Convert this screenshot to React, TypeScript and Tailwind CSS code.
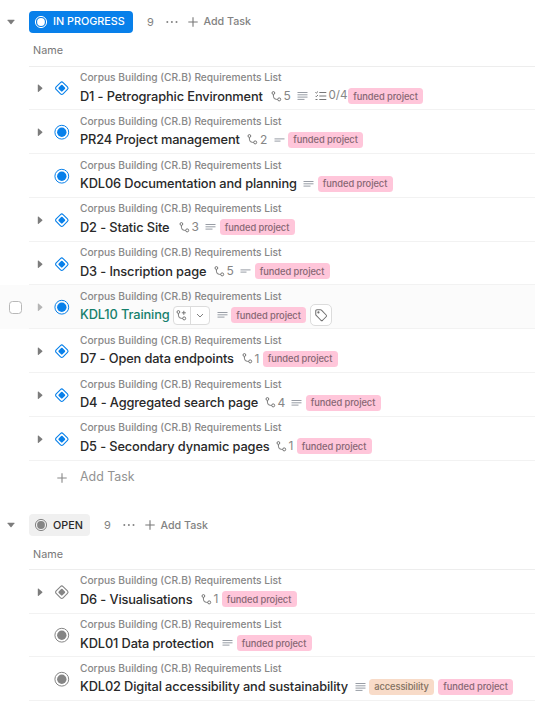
import React from "react";

type Shape = "diamond" | "circle";
type Lines = "short" | "medium" | "long";

interface Task {
  title: string;
  width: string;
  shape: Shape;
  expandable?: boolean;
  subtasks?: number;
  lines?: Lines;
  checklist?: string;
  accessibility?: boolean;
  hovered?: boolean;
}

const IN_PROGRESS: Task[] = [
  { title: "D1 - Petrographic Environment", width: "w-[183px]", shape: "diamond", expandable: true, subtasks: 5, lines: "long", checklist: "0/4" },
  { title: "PR24 Project management", width: "w-[159.5px]", shape: "circle", expandable: true, subtasks: 2, lines: "short" },
  { title: "KDL06 Documentation and planning", width: "w-[216px]", shape: "circle", lines: "medium" },
  { title: "D2 - Static Site", width: "w-[91px]", shape: "diamond", expandable: true, subtasks: 3, lines: "medium" },
  { title: "D3 - Inscription page", width: "w-[126px]", shape: "diamond", expandable: true, subtasks: 5, lines: "short" },
  { title: "KDL10 Training", width: "w-[89.5px]", shape: "circle", expandable: true, lines: "medium", hovered: true },
  { title: "D7 - Open data endpoints", width: "w-[154px]", shape: "diamond", expandable: true, subtasks: 1 },
  { title: "D4 - Aggregated search page", width: "w-[177px]", shape: "diamond", expandable: true, subtasks: 4, lines: "medium" },
  { title: "D5 - Secondary dynamic pages", width: "w-[188px]", shape: "diamond", expandable: true, subtasks: 1 },
];

const OPEN: Task[] = [
  { title: "D6 - Visualisations", width: "w-[113px]", shape: "diamond", expandable: true, subtasks: 1 },
  { title: "KDL01 Data protection", width: "w-[135px]", shape: "circle", lines: "medium" },
  { title: "KDL02 Digital accessibility and sustainability", width: "w-[267.5px]", shape: "circle", lines: "long", accessibility: true },
];

function StatusIcon({ shape, className }: { shape: Shape; className: string }) {
  return (
    <svg viewBox="0 0 16 16" className={`size-4 shrink-0 ${className}`} fill="none">
      {shape === "circle" ? (
        <>
          <circle cx="7.8" cy="8.2" r="6.9" stroke="currentColor" strokeWidth="1" />
          <circle cx="7.8" cy="8.2" r="4.7" fill="currentColor" />
        </>
      ) : (
        <>
          <rect x="2.9" y="3.3" width="9.8" height="9.8" rx="1.8" transform="rotate(45 7.8 8.2)" stroke="currentColor" strokeWidth="1.1" />
          <rect x="5.1" y="5.5" width="5.4" height="5.4" rx="1" transform="rotate(45 7.8 8.2)" fill="currentColor" />
        </>
      )}
    </svg>
  );
}

function Caret({ down, light }: { down?: boolean; light?: boolean }) {
  return (
    <svg viewBox="0 0 8 8" className={`size-2 shrink-0 ${light ? "text-[#b5b5b5]" : "text-[#7c7c7c]"}`} fill="currentColor">
      {down ? (
        <path d="M.8 1.8h6.4q.6 0 .3.5L4.5 6q-.5.5-1 0L.5 2.3q-.3-.5.3-.5Z" />
      ) : (
        <path d="M1.8.8v6.8q0 .6.6.3L6.2 4.7q.5-.5 0-1L2.4.5q-.6-.3-.6.3Z" />
      )}
    </svg>
  );
}

function Branch({ plus }: { plus?: boolean }) {
  return (
    <svg viewBox="0 0 11 11" className="size-[11px] shrink-0 text-[#757575]" fill="none" stroke="currentColor" strokeWidth="1">
      <circle cx="2.4" cy="2" r="1.4" />
      <path d="M2.4 3.4v1.8q0 3.2 3.2 3.2h1.1" />
      <circle cx="8.2" cy="8.4" r="1.5" />
      {plus && <path d="M7.8.8v4M5.8 2.8h4" />}
    </svg>
  );
}

function LinesIcon({ kind }: { kind: Lines }) {
  return (
    <svg viewBox="0 0 11 10" className="h-2.5 w-[11px] shrink-0 text-[#989da5]" fill="none" stroke="currentColor" strokeWidth="1">
      {kind === "long" && <path d="M.5 1.5h10M.5 3.8h10M.5 6.1h10M.5 8.4h7" />}
      {kind === "medium" && <path d="M.5 2.5h10M.5 4.8h10M.5 7.1h7" />}
      {kind === "short" && <path d="M.5 3.9h10M.5 6.1h6" />}
    </svg>
  );
}

function ChecklistIcon() {
  return (
    <svg viewBox="0 0 12 10" className="h-2.5 w-3 shrink-0 text-[#777]" fill="none" stroke="currentColor" strokeWidth="1">
      <path d="M4.3 1.5h7M4.3 5h7M4.3 8.5h7M.4 1.4l.8.8L3 .5M.4 4.9l.8.8L3 4M.5 8.5h2" />
    </svg>
  );
}

function Plus({ className }: { className: string }) {
  return (
    <svg viewBox="0 0 10 10" className={`size-2.5 shrink-0 ${className}`} fill="none" stroke="currentColor" strokeWidth="1.1">
      <path d="M5 .3v9.4M.3 5h9.4" />
    </svg>
  );
}

function FundedTag() {
  return (
    <span className="flex h-4 w-[75px] shrink-0 items-center justify-center rounded-[3.5px] bg-[#ffc6da] pt-px text-[9.3px] font-medium tracking-[-0.05px] text-[#866673]">
      funded project
    </span>
  );
}

function TaskRow({ task, color }: { task: Task; color: string }) {
  return (
    <div className={`flex h-[43.8px] ${task.hovered ? "bg-[#fbfbfb]" : ""}`}>
      <div className="flex w-[29px] shrink-0 items-center pl-[8.5px]">
        {task.hovered && <span className="size-[13px] rounded-[3.5px] border border-[#b8b8b8] bg-white" />}
      </div>
      <div className="flex min-w-0 grow border-b border-[#f2f2f2]">
        <div className="flex w-[25px] shrink-0 items-center pt-px pl-[7px]">
          {task.expandable && <Caret light={task.hovered} />}
        </div>
        <div className="flex w-[26px] shrink-0 items-center pt-px">
          <StatusIcon shape={task.shape} className={color} />
        </div>
        <div className="flex flex-col pt-[4.6px] whitespace-nowrap">
          <div className="h-[13px] text-[10.2px] leading-[13px] font-medium text-[#878787]">
            <span>Corpus Building (CR.B) Requirements List</span>
          </div>
          <div className="flex h-6 items-center">
            <span className={`shrink-0 text-[12.8px] font-medium tracking-[-0.12px] ${task.width} ${task.hovered ? "text-[#16806c]" : "text-[#292929]"}`}>
              {task.title}
            </span>
            {task.hovered && (
              <span className="ml-[3px] flex h-[19px] w-[37px] shrink-0 rounded-[4px] border border-[#dcdcdc] bg-white">
                <span className="flex w-[17px] items-center justify-center border-r border-[#dcdcdc]">
                  <Branch plus />
                </span>
                <span className="flex grow items-center justify-center">
                  <svg viewBox="0 0 8 5" className="h-[5px] w-2 text-[#808080]" fill="none" stroke="currentColor">
                    <path d="m1 1 3 3 3-3" />
                  </svg>
                </span>
              </span>
            )}
            {task.subtasks && (
              <span className={`ml-[7.5px] flex shrink-0 items-center gap-[2px] text-xs text-[#858585] ${task.lines ? "w-[19.5px]" : "w-[21px]"}`}>
                <Branch />
                {task.subtasks}
              </span>
            )}
            {task.lines && (
              <span className="mr-[3.5px] ml-[7px] flex shrink-0">
                <LinesIcon kind={task.lines} />
              </span>
            )}
            {task.checklist && (
              <span className="ml-[3px] flex w-[33.5px] shrink-0 items-center gap-[2px] text-[11.6px] text-[#858585]">
                <ChecklistIcon />
                {task.checklist}
              </span>
            )}
            {task.accessibility && (
              <span className="mr-1 flex h-4 w-[65px] shrink-0 items-center justify-center rounded-[3.5px] bg-[#f8dbc8] pt-px text-[9.3px] font-medium tracking-[-0.05px] text-[#80705f]">
                accessibility
              </span>
            )}
            <FundedTag />
            {task.hovered && (
              <span className="ml-[3.5px] flex size-[22px] shrink-0 items-center justify-center rounded-[5px] border border-[#dcdcdc] bg-white">
                <svg viewBox="0 0 24 24" className="size-[14px] text-[#707070]" fill="none" stroke="currentColor" strokeWidth="1.8" strokeLinejoin="round">
                  <path d="M3 5v6q0 1 .8 1.8l8 8.2q1.5 1.4 3 0l6-6q1.5-1.5 0-3l-8-8.2Q12 3 11 3H5Q3 3 3 5Z" />
                  <circle cx="7.6" cy="7.6" r="1" fill="currentColor" />
                </svg>
              </span>
            )}
          </div>
        </div>
      </div>
    </div>
  );
}

function GroupHeader({ label, active }: { label: string; active?: boolean }) {
  return (
    <div className="flex h-[22px] items-center pl-[7px] text-[11px] font-medium text-[#828282]">
      <div className="w-[22px] shrink-0">
        <Caret down />
      </div>
      <span
        className={`flex h-[22px] shrink-0 items-center gap-[5px] rounded-[4px] pl-[5px] text-[10.8px] ${
          active ? "w-[104px] bg-[#0880ea] text-white" : "w-[61px] bg-[#f0f0f0] text-[#292929]"
        }`}
      >
        <svg viewBox="0 0 14 14" className={`size-3.5 shrink-0 ${active ? "text-white" : "text-[#858585]"}`} fill="none">
          <circle cx="7" cy="7" r="5.6" stroke="currentColor" />
          <circle cx="7" cy="7" r="3.9" fill="currentColor" />
        </svg>
        <span className="pt-px">{label}</span>
      </span>
      <span className="ml-[14px] w-[18.5px] shrink-0 font-normal">9</span>
      <svg viewBox="0 0 12 4" className="h-1 w-3 shrink-0" fill="currentColor">
        <circle cx="1.3" cy="2" r="1" />
        <circle cx="5.9" cy="2" r="1" />
        <circle cx="10.5" cy="2" r="1" />
      </svg>
      <Plus className="ml-[10px] text-[#777]" />
      <span className="ml-[6px] pt-px text-[10.7px]">Add Task</span>
    </div>
  );
}

function NameHeader() {
  return (
    <div className="ml-[29px] flex h-[33.5px] items-center border-b border-[#ededed] pt-[4.5px] pl-1 text-[10.8px] text-[#777]">
      Name
    </div>
  );
}

export default function App() {
  return (
    <main className="h-[706px] w-[535px] overflow-hidden bg-white pt-[11px] font-['Inter','Liberation_Sans',sans-serif]">
      <section>
        <GroupHeader label="IN PROGRESS" active />
        <NameHeader />
        {IN_PROGRESS.map((task) => (
          <TaskRow key={task.title} task={task} color="text-[#0880ea]" />
        ))}
        <div className="flex h-[34px] items-center pl-[57px] text-[12.4px] text-[#929292]">
          <Plus className="mr-[13px] text-[#888]" />
          Add Task
        </div>
      </section>
      <section className="mt-[19.6px]">
        <GroupHeader label="OPEN" />
        <NameHeader />
        {OPEN.map((task) => (
          <TaskRow key={task.title} task={task} color="text-[#858585]" />
        ))}
      </section>
    </main>
  );
}
